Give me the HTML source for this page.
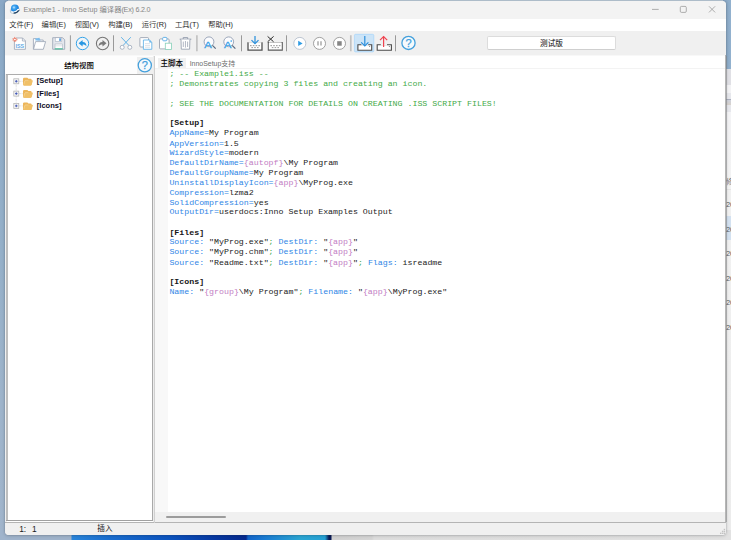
<!DOCTYPE html>
<html lang="zh-CN">
<head>
<meta charset="utf-8">
<title>Example1 - Inno Setup 编译器(Ex) 6.2.0</title>
<style>
html,body{margin:0;padding:0;}
body{width:731px;height:540px;overflow:hidden;position:relative;background:#8fadc9;
  font-family:"Liberation Sans","Noto Sans CJK SC",sans-serif;}
.abs{position:absolute;}
/* desktop / other windows behind */
#bgleft{left:0;top:0;width:8px;height:540px;background:linear-gradient(180deg,#88a7c5 0,#8dabc8 60px,#95b0c9 250px,#9eb4cb 400px,#a1b5cc 540px);}
#bgtop{left:0;top:0;width:731px;height:4px;background:#8aa8c6;}
#topline{left:8px;top:0;width:715px;height:1px;background:#adbcc9;z-index:5;}
#bgright1{left:722px;top:0;width:9px;height:69px;background:linear-gradient(90deg,#88a6c4 0,#8cabc8 5px,#93b2cf 9px);}
#bgright2{left:722px;top:69px;width:9px;height:471px;background:linear-gradient(180deg,#e0e0e5 0,#e0e0e5 15.6px,#f3f3f5 15.6px,#f3f3f5 24px,#e6e7ec 24px,#e6e7ec 30px,#8f96a8 30px,#cfd2dc 31.2px,#d9d2ca 36.4px,#e6e7ec 36.4px,#e6e7ec 43.5px,#f4f4f6 43.5px,#f4f4f6 51px,#f2f2f4 51px,#f3f3f3 120px,#e6e6e6 120.5px,#f1f1f1 121px,#f1f1f1 147px,#d3e1f0 147px,#d3e1f0 171.5px,#f1f1f1 171.5px,#eeeeee 300px,#ececec 466px,#dedede 471px);}
.bt{left:726px;width:8px;font-size:7.4px;line-height:9px;height:9px;color:#5a5a5a;white-space:nowrap;overflow:hidden;}
#bgbottom{left:0;top:530px;width:731px;height:10px;
  background:linear-gradient(90deg,#a0b4cc 0,#a0b4cc 71px,#2a86dc 72px,#1a6ed0 110px,#0c54c0 170px,#0738a2 215px,#062a8e 246px,#1266cc 248px,#1a7cd4 265px,#2aa6d4 300px,#25a2d6 325px,#0a1a55 329px,#0a1a55 331px,#d2d2d2 332px,#d6d6d6 372px,#dedede 374px,#e2e2e2 731px);}
/* main window */
#win{left:5px;top:1px;width:721px;height:534px;border-radius:4px;background:#f0f0f0;overflow:hidden;
  box-shadow:0 0 0 0.5px rgba(90,100,120,.14),0 0 2px 0.2px rgba(0,0,0,.07),0 1px 4px rgba(0,0,0,.12);}
#titlebar{left:0;top:0;width:721px;height:18px;background:#f3f3f3;}
#title{left:18.4px;top:2.1px;height:14px;line-height:14px;font-size:7.15px;color:#858585;white-space:nowrap;}
#menubar{left:0;top:18px;width:721px;height:11.7px;background:#fff;}
.mi{top:18px;height:11.7px;line-height:12.2px;font-size:7.3px;color:#1e1e1e;font-weight:350;white-space:nowrap;}
#toolbar{left:0;top:29.7px;width:721px;height:24.6px;background:#f0f0f0;}
#tbline{left:0;top:54.2px;width:721px;height:1px;background:#f8f8f8;}
#below{left:0;top:55px;width:721px;height:467px;background:#fff;}
/* left panel */
#lphead{left:0;top:55px;width:148px;height:18.5px;background:#fdfdfd;}
#lptitle{left:44px;top:58px;width:60px;text-align:center;font-size:7.4px;line-height:13px;color:#000;font-weight:500;white-space:nowrap;}
#helpbtn{left:131.5px;top:56px;width:16.5px;height:16.5px;background:#efefef;}
#tree{left:1.2px;top:73px;width:146.4px;height:446.5px;background:#bebebe;}
#treein{left:3px;top:74px;width:143.6px;height:444.5px;background:#fff;}
#treetop{left:1.2px;top:73px;width:146.4px;height:1px;background:#adadad;}
#treeright{left:146.6px;top:73px;width:1px;height:446.5px;background:#a9a9a9;}
#treebot{left:1.2px;top:518.5px;width:146.4px;height:1px;background:#a0a0a0;}
.tn{left:31.8px;height:12px;line-height:12px;font-size:7.55px;font-weight:bold;color:#0c0c24;white-space:nowrap;}
#lpgap{left:0;top:73px;width:2px;height:449px;background:#f0f0f0;}
#splitter{left:148px;top:55px;width:2.2px;height:467px;background:#ececec;}
/* right panel */
#tabactive{left:152.5px;top:56.5px;width:28.5px;height:10.6px;background:#f0f0f0;}
#tab1{left:155.5px;top:56.5px;height:10.6px;line-height:11.4px;font-size:7.5px;color:#000;font-weight:500;white-space:nowrap;}
#tab2{left:184.7px;top:56.5px;height:10.6px;line-height:12.2px;font-size:6.95px;color:#6c6c6c;white-space:nowrap;}
#editor{left:150px;top:67px;width:571px;height:454.5px;background:#fff;}
#gutter{left:150px;top:67px;width:13px;height:444px;background:#f8f8f8;}
#edleft{left:149.2px;top:55px;width:1px;height:467px;background:#d0d0d0;z-index:2;}
#edtop{left:150px;top:67px;width:570px;height:1px;background:#f3f3f3;}
#hscroll{left:150.2px;top:510.6px;width:570px;height:10.2px;background:#f0f0f0;}
#thumb{left:160.8px;top:515px;width:60px;height:1.6px;border-radius:1px;background:#9c9c9c;}
#edbottom{left:0;top:520.6px;width:721px;height:1px;background:#b4b4b4;}
#edright{left:720px;top:54px;width:1px;height:468px;background:#b6b6b6;}
#rshadow{left:726px;top:56px;width:1px;height:466px;background:rgba(150,150,150,.5);}
#statusbar{left:0;top:521.6px;width:721px;height:13px;background:#f0f0f0;}
.st{top:522px;height:12px;line-height:12.4px;font-size:7.6px;color:#1a1a1a;white-space:pre;}
pre#code{left:164.4px;top:68.25px;margin:0;font-family:"Liberation Mono",monospace;font-size:8.28px;line-height:11.673px;transform:scaleY(0.85);transform-origin:0 0;color:#1c1c1c;white-space:pre;letter-spacing:0;}
.c{color:#44aa48}.k{color:#2f86e6}.p{color:#c27ec4}.s{font-weight:bold;color:#161616}
.tbox{left:482.3px;top:35.4px;width:128.4px;height:14px;box-sizing:border-box;border:1px solid #dcdcdc;border-radius:2px;background:#fff;
 text-align:center;font-size:7.6px;line-height:14.2px;color:#000;border-bottom-color:#cfcfcf;}
svg{position:absolute;left:0;top:0;overflow:visible}
</style>
</head>
<body>
<div class="abs" id="bgleft"></div>
<div class="abs" id="bgtop"></div>
<div class="abs" id="topline"></div>
<div class="abs" id="bgright1"></div>
<div class="abs" id="bgright2"></div>
<div class="abs" id="bgbottom"></div>
<div class="abs bt" style="top:176.5px;color:#777">修</div>
<div class="abs bt" style="top:200px">20</div>
<div class="abs bt" style="top:224.5px">20</div>
<div class="abs bt" style="top:249px">20</div>
<div class="abs bt" style="top:273.5px">20</div>
<div class="abs bt" style="top:298px">20</div>
<div class="abs bt" style="top:322.5px">20</div>

<div class="abs" id="rshadow"></div>
<div class="abs" id="win">
  <div class="abs" id="titlebar"></div>
  <div class="abs" id="title"><span style="letter-spacing:.07px">Example1 - Inno Setup </span><span style="font-size:7.3px">编译器</span><span style="letter-spacing:-.22px">(Ex) 6.2.0</span></div>
  <div class="abs" id="menubar"></div>
  <div class="abs mi" style="left:4.3px">文件(F)</div>
  <div class="abs mi" style="left:36.6px">编辑(E)</div>
  <div class="abs mi" style="left:69.7px">视图(V)</div>
  <div class="abs mi" style="left:103.2px">构建(B)</div>
  <div class="abs mi" style="left:136.7px">运行(R)</div>
  <div class="abs mi" style="left:170px">工具(T)</div>
  <div class="abs mi" style="left:203.2px">帮助(H)</div>
  <div class="abs" id="toolbar"></div>
  <div class="abs" id="tbline"></div>
  <div class="abs" id="below"></div>

  <div class="abs" id="lphead"></div>
  <div class="abs" id="lptitle">结构视图</div>
  <div class="abs" id="helpbtn"></div>
  <div class="abs" id="lpgap"></div>
  <div class="abs" id="tree"></div><div class="abs" id="treein"></div><div class="abs" id="treetop"></div><div class="abs" id="treeright"></div><div class="abs" id="treebot"></div>
  <div class="abs tn" style="top:74.4px">[Setup]</div>
  <div class="abs tn" style="top:86.7px">[Files]</div>
  <div class="abs tn" style="top:99px">[Icons]</div>
  <div class="abs" id="splitter"></div>

  <div class="abs" id="editor"></div>
  <div class="abs" id="gutter"></div>
  <div class="abs" id="edleft"></div>
  <div class="abs" id="edtop"></div>
  <div class="abs" id="tabactive"></div>
  <div class="abs" id="tab1">主脚本</div>
  <div class="abs" id="tab2">InnoSetup支持</div>
  <div class="abs" id="hscroll"></div>
  <div class="abs" id="thumb"></div>
  <div class="abs" id="edright"></div>
  <div class="abs" id="edbottom"></div>
  <div class="abs" id="statusbar"></div>
  <div class="abs st" style="left:14.2px;font-size:8.4px;word-spacing:-0.4px">1:   1</div>
  <div class="abs st" style="left:92.3px">插入</div>
  <div class="abs tbox">测试版</div>

<pre class="abs" id="code"><span class="c">; -- Example1.iss --</span>
<span class="c">; Demonstrates copying 3 files and creating an icon.</span>

<span class="c">; SEE THE DOCUMENTATION FOR DETAILS ON CREATING .ISS SCRIPT FILES!</span>

<span class="s">[Setup]</span>
<span class="k">AppName=</span>My Program
<span class="k">AppVersion=</span>1.5
<span class="k">WizardStyle=</span>modern
<span class="k">DefaultDirName=</span><span class="p">{autopf}</span>\My Program
<span class="k">DefaultGroupName=</span>My Program
<span class="k">UninstallDisplayIcon=</span><span class="p">{app}</span>\MyProg.exe
<span class="k">Compression=</span>lzma2
<span class="k">SolidCompression=</span>yes
<span class="k">OutputDir=</span>userdocs:Inno Setup Examples Output

<span class="s">[Files]</span>
<span class="k">Source:</span> "MyProg.exe"<span class="c">;</span> <span class="k">DestDir:</span> "<span class="p">{app}</span>"
<span class="k">Source:</span> "MyProg.chm"<span class="c">;</span> <span class="k">DestDir:</span> "<span class="p">{app}</span>"
<span class="k">Source:</span> "Readme.txt"<span class="c">;</span> <span class="k">DestDir:</span> "<span class="p">{app}</span>"<span class="c">;</span> <span class="k">Flags:</span> isreadme

<span class="s">[Icons]</span>
<span class="k">Name:</span> "<span class="p">{group}</span>\My Program"<span class="c">;</span> <span class="k">Filename:</span> "<span class="p">{app}</span>\MyProg.exe"</pre>
</div>

<!-- icons overlay in page coordinates -->
<svg width="731" height="540" viewBox="0 0 731 540">
<!--ICONS-->
<!-- app icon -->
<g>
  <defs><radialGradient id="gsph" cx="38%" cy="38%" r="70%"><stop offset="0" stop-color="#c4e6ff"/><stop offset=".3" stop-color="#3ea4f0"/><stop offset=".75" stop-color="#1880dc"/><stop offset="1" stop-color="#0f5cae"/></radialGradient></defs>
  <path d="M10.5 9.4Q9.6 13.4 13.6 13.3Q18 13 19.7 8.7" fill="none" stroke="#bccad6" stroke-width="1.1"/>
  <circle cx="14.9" cy="8.4" r="4" fill="url(#gsph)"/>
  <path d="M11.4 11.6Q14.6 13.4 18.8 9.4" fill="none" stroke="#f4f8fb" stroke-width="1.5"/>
  <path d="M13.6 13.2Q17.4 13 19.2 9.8" fill="none" stroke="#1c3f60" stroke-width="1.2"/>
  <ellipse cx="18.3" cy="9.5" rx="1.1" ry=".8" fill="#fff"/>
</g>
<!-- window controls -->
<g fill="none" stroke="#9a9a9a" stroke-width=".8">
  <path d="M652 9.4H658.7"/>
  <rect x="680.3" y="6.4" width="6" height="6" rx="1.2"/>
  <path d="M709 6.3L715.1 12.4M715.1 6.3L709 12.4"/>
</g>
<!-- toolbar separators -->
<g fill="none" stroke-width="1">
  <path d="M70.4 35.3V51.3M113.5 35.3V51.3M241.5 35.3V51.3M286.5 35.3V51.3M395.5 35.3V51.3" stroke="#8e8e8e" stroke-width=".9"/>
  <path d="M196.9 35.3V51.3M350.8 35.3V51.3" stroke="#c2c2c2" stroke-width="1.7"/>
</g>
<!-- 1 new iss -->
<g>
  <path d="M16.3 38H22.6L25.4 40.8V49.3H14.4V41" fill="#fff" stroke="#97a1b3" stroke-width=".8"/>
  <path d="M22.4 38.2V41H25.2" fill="none" stroke="#97a1b3" stroke-width=".7"/>
  <circle cx="14.9" cy="39.5" r="2.1" fill="none" stroke="#ea6a52" stroke-width=".9" stroke-dasharray=".8 .85"/>
  <circle cx="14.9" cy="39.5" r="1.3" fill="#fff" stroke="#ea6a52" stroke-width=".9"/>
  <text x="15.5" y="47.8" font-family="Liberation Sans,sans-serif" font-size="5.4" font-weight="bold" fill="#62a8e4" textLength="8.6" lengthAdjust="spacingAndGlyphs">ISS</text>
</g>
<!-- 2 open -->
<g>
  <path d="M33.4 49.3V38.6H36.4L37.4 40H43.2V41.6" fill="#fff" stroke="#97a1b3" stroke-width=".8"/>
  <path d="M35.4 38.6L39.4 37.8L40.6 40.6H35.4Z" fill="#7dbcec"/>
  <path d="M33.5 49.3L35.6 41.6H45.6L43.3 49.3Z" fill="#fff" stroke="#97a1b3" stroke-width=".8"/>
</g>
<!-- 3 save -->
<g>
  <path d="M52.7 37.7H62.6L64.7 39.8V49.3H52.7Z" fill="#e4e7ed" stroke="#97a1b3" stroke-width=".8"/>
  <rect x="55.2" y="37.8" width="6.6" height="3.8" fill="#fff" stroke="#97a1b3" stroke-width=".5"/>
  <rect x="59.3" y="38.3" width="1.5" height="2.6" fill="#3f8fd8"/>
  <rect x="55" y="44" width="7.6" height="5" fill="#fff" stroke="#9aa3b3" stroke-width=".5"/>
  <path d="M55 45.8H62.6" stroke="#c2c8d2" stroke-width=".5"/>
  <rect x="54.8" y="48.2" width="8" height="1.3" fill="#58c0a0"/>
</g>
<!-- 4 undo -->
<g>
  <circle cx="82.5" cy="43.5" r="6.2" fill="#f1f5f8" stroke="#35a3e8" stroke-width="1"/>
  <path d="M78.6 43.2L82.6 39.9V42C85.4 42 86.6 43.8 86.4 46.6C85.6 45.2 84.6 44.6 82.6 44.6V46.6Z" fill="#2797e2"/>
</g>
<!-- 5 redo -->
<g>
  <circle cx="102.6" cy="43.5" r="6.2" fill="#f1f1f1" stroke="#767676" stroke-width="1.1"/>
  <path d="M106.5 43.2L102.5 39.9V42C99.7 42 98.5 43.8 98.7 46.6C99.5 45.2 100.5 44.6 102.5 44.6V46.6Z" fill="#7a7a7a"/>
</g>
<!-- 6 cut -->
<g fill="none">
  <path d="M121.2 37.2L129.4 46M130.8 37.2L122.6 46" stroke="#52ace4" stroke-width=".9"/>
  <circle cx="122.2" cy="47.3" r="2" fill="#fff" stroke="#9aa6b8" stroke-width=".8"/>
  <circle cx="129.8" cy="47.3" r="2" fill="#fff" stroke="#9aa6b8" stroke-width=".8"/>
</g>
<!-- 7 copy -->
<g>
  <rect x="139.9" y="37.6" width="8.6" height="9.4" rx=".8" fill="#fff" stroke="#8f99aa" stroke-width=".8"/>
  <path d="M143.4 40H149.6L151.8 42.2V49.3H143.4Z" fill="#fff" stroke="#56ace6" stroke-width=".8"/>
  <path d="M149.4 40V42.4H151.8Z" fill="#56ace6"/>
  <path d="M145 43.6H150M145 45.4H150M145 47.2H150" stroke="#c6ccd6" stroke-width=".6"/>
</g>
<!-- 8 paste -->
<g>
  <rect x="159.5" y="38.9" width="9.6" height="10" rx="1" fill="#fff" stroke="#8f99aa" stroke-width=".8"/>
  <rect x="162.7" y="37.4" width="4.2" height="3.4" rx=".9" fill="#fff" stroke="#56ace6" stroke-width=".9"/>
  <rect x="165.3" y="43.2" width="6.2" height="6.2" fill="#fff" stroke="#86d0b8" stroke-width=".8"/>
</g>
<!-- 9 trash -->
<g fill="none" stroke="#8f99aa" stroke-width=".8">
  <path d="M183.2 39V37.6H187.7V39" stroke-width=".9"/>
  <path d="M179.7 39.2H191.3" stroke-width="1"/>
  <path d="M181 39.6L181.3 49.2H189.6L189.9 39.6" fill="#fff"/>
  <path d="M183.3 41.6V47M185.45 41V47.6M187.6 41.6V47" stroke-width=".7"/>
</g>
<!-- 10 find -->
<g>
  <circle cx="209" cy="41.8" r="4.9" fill="#fcfcfe" stroke="#919db2" stroke-width=".9"/>
  <path d="M212.4 45.4L215.7 48.7" stroke="#5a6a80" stroke-width="1.2"/>
  <text x="204.3" y="47.8" font-family="Liberation Sans,sans-serif" font-size="9" fill="#35a0e8" stroke="#35a0e8" stroke-width=".3" textLength="7.4" lengthAdjust="spacingAndGlyphs">A</text>
</g>
<!-- 11 find next -->
<g>
  <circle cx="228.7" cy="41.8" r="4.9" fill="#fcfcfe" stroke="#919db2" stroke-width=".9"/>
  <path d="M232.1 45.4L235.4 48.7" stroke="#5a6a80" stroke-width="1.2"/>
  <text x="224" y="47.8" font-family="Liberation Sans,sans-serif" font-size="9" fill="#35a0e8" stroke="#35a0e8" stroke-width=".3" textLength="7.4" lengthAdjust="spacingAndGlyphs">A</text>
  <circle cx="231.2" cy="41.1" r=".8" fill="#35a0e8"/>
</g>
<!-- 12 compile -->
<g>
  <path d="M247.6 42.4H262.4V50.4H247.6Z" fill="#fff"/>
  <path d="M248 42.3V50.1H262V42.3" fill="none" stroke="#505050" stroke-width="1.3"/>
  <path d="M248.6 42.6H261.4" stroke="#b8b8b8" stroke-width=".4"/>
  <path d="M250 45.7H260" stroke="#707070" stroke-width=".8" stroke-dasharray="1.6 1.2"/>
  <path d="M251.4 47.6H259" stroke="#808080" stroke-width=".8" stroke-dasharray="1.6 1.2"/>
  <path d="M255 36V43.2" stroke="#2b90dc" stroke-width="1.25"/>
  <path d="M251.5 40.1L255 43.7L258.5 40.1" fill="none" stroke="#2b90dc" stroke-width="1.25"/>
</g>
<!-- 13 stop compile -->
<g>
  <path d="M268.3 42.5H282.3V50.1H268.3Z" fill="#fff" stroke="#5a5a5a" stroke-width="1.05"/>
  <path d="M269 42.5H281.6" stroke="#f4f4f4" stroke-width=".7"/>
  <path d="M270.4 45.7H280.4" stroke="#707070" stroke-width=".8" stroke-dasharray="1.6 1.2"/>
  <path d="M271.8 47.6H279.4" stroke="#808080" stroke-width=".8" stroke-dasharray="1.6 1.2"/>
  <path d="M267.6 36.4L273.6 41.8M273.6 36.4L267.6 41.8" stroke="#2a2a2a" stroke-width="1"/>
</g>
<!-- 14 run -->
<g>
  <circle cx="299.8" cy="43.4" r="6" fill="#fff" stroke="#a3b0c2" stroke-width=".7"/>
  <path d="M298.2 40.7L302.6 43.4L298.2 46.1Z" fill="#2f9ce4"/>
</g>
<!-- 15 pause -->
<g>
  <circle cx="319.5" cy="43.4" r="6" fill="#fff" stroke="#8a8a8a" stroke-width=".8"/>
  <path d="M318 41.2V45.6M321 41.2V45.6" stroke="#8a8a8a" stroke-width="1.1"/>
</g>
<!-- 16 stop -->
<g>
  <circle cx="339.5" cy="43.4" r="6" fill="#fff" stroke="#8a8a8a" stroke-width=".8"/>
  <rect x="337.2" y="41.2" width="4.5" height="4.5" fill="#858585"/>
</g>
<!-- 17 selected import -->
<g>
  <rect x="354.4" y="34.3" width="19.4" height="17.6" rx="1.2" fill="#cce4f7" stroke="#9ad0fb" stroke-width=".6"/>
  <path d="M357.9 44.8H371.7V50.2H357.9Z" fill="#fff" stroke="#4a4a4a" stroke-width="1.1"/>
  <path d="M361.4 44H368.2V45.7H361.4Z" fill="#eaf3fb"/>
  <circle cx="369.7" cy="46.4" r=".5" fill="#666"/>
  <path d="M364.8 36V45.8" stroke="#2b8edb" stroke-width="1.2"/>
  <path d="M361.2 42.4L364.8 46L368.4 42.4" fill="none" stroke="#2b8edb" stroke-width="1.2"/>
</g>
<!-- 18 export -->
<g>
  <path d="M377.2 44.8H391.4V50.2H377.2Z" fill="#fff" stroke="#4a4a4a" stroke-width="1.1"/>
  <path d="M380.8 44H387V45.7H380.8Z" fill="#f4f4f4"/>
  <circle cx="389.3" cy="46.4" r=".5" fill="#666"/>
  <path d="M383.6 36.8V47" stroke="#f0434f" stroke-width="1.2"/>
  <path d="M380 40.2L383.6 36.6L387.2 40.2" fill="none" stroke="#f0434f" stroke-width="1.2"/>
</g>
<!-- 19 help -->
<g>
  <circle cx="408.5" cy="42.9" r="6.6" fill="#f6fafd" stroke="#44a0dc" stroke-width="1.3"/>
  <text x="408.5" y="46.9" text-anchor="middle" font-family="Liberation Sans,sans-serif" font-size="11" fill="#44a0dc" stroke="#44a0dc" stroke-width=".25">?</text>
</g>
<!-- left panel help -->
<g>
  <circle cx="144.8" cy="65.3" r="6.6" fill="#f6fafd" stroke="#44a0dc" stroke-width="1.3"/>
  <text x="144.8" y="69.3" text-anchor="middle" font-family="Liberation Sans,sans-serif" font-size="11" fill="#44a0dc" stroke="#44a0dc" stroke-width=".25">?</text>
</g>
<!-- tree -->
<g>
  <path d="M16.2 83.6V103.2M19 81.3H23M19 93.6H23M19 105.9H23" stroke="#c4c4c4" stroke-width=".7" stroke-dasharray=".7 .7"/>
  <g>
    <rect x="13.8" y="78.8" width="5" height="5" fill="#f4f4f4" stroke="#b0b0b0" stroke-width=".7"/>
    <path d="M15 81.3H17.6M16.3 80V82.6" stroke="#3048b0" stroke-width=".8"/>
    <path d="M23 79Q23 77.8 24.2 77.8H27.4L28.4 78.8H30.6Q31.6 78.8 31.6 79.8V84.3Q31.6 85.5 30.4 85.5H24.2Q23 85.5 23 84.3Z" fill="#ecb55a"/>
    <path d="M25.4 80.2H32.2Q33.1 80.2 32.8 81.1L31.6 84.7Q31.3 85.5 30.4 85.5H24Q23.3 85.5 23.6 84.6L24.6 81Q24.8 80.2 25.4 80.2Z" fill="#f0c068"/>
    <path d="M23.8 84.4L24.8 80.9Q25 80.3 25.7 80.3H28.4" fill="none" stroke="#f8e2b8" stroke-width=".45"/>
  </g>
  <g transform="translate(0 12.3)">
    <rect x="13.8" y="78.8" width="5" height="5" fill="#f4f4f4" stroke="#b0b0b0" stroke-width=".7"/>
    <path d="M15 81.3H17.6M16.3 80V82.6" stroke="#3048b0" stroke-width=".8"/>
    <path d="M23 79Q23 77.8 24.2 77.8H27.4L28.4 78.8H30.6Q31.6 78.8 31.6 79.8V84.3Q31.6 85.5 30.4 85.5H24.2Q23 85.5 23 84.3Z" fill="#ecb55a"/>
    <path d="M25.4 80.2H32.2Q33.1 80.2 32.8 81.1L31.6 84.7Q31.3 85.5 30.4 85.5H24Q23.3 85.5 23.6 84.6L24.6 81Q24.8 80.2 25.4 80.2Z" fill="#f0c068"/>
    <path d="M23.8 84.4L24.8 80.9Q25 80.3 25.7 80.3H28.4" fill="none" stroke="#f8e2b8" stroke-width=".45"/>
  </g>
  <g transform="translate(0 24.6)">
    <rect x="13.8" y="78.8" width="5" height="5" fill="#f4f4f4" stroke="#b0b0b0" stroke-width=".7"/>
    <path d="M15 81.3H17.6M16.3 80V82.6" stroke="#3048b0" stroke-width=".8"/>
    <path d="M23 79Q23 77.8 24.2 77.8H27.4L28.4 78.8H30.6Q31.6 78.8 31.6 79.8V84.3Q31.6 85.5 30.4 85.5H24.2Q23 85.5 23 84.3Z" fill="#ecb55a"/>
    <path d="M25.4 80.2H32.2Q33.1 80.2 32.8 81.1L31.6 84.7Q31.3 85.5 30.4 85.5H24Q23.3 85.5 23.6 84.6L24.6 81Q24.8 80.2 25.4 80.2Z" fill="#f0c068"/>
    <path d="M23.8 84.4L24.8 80.9Q25 80.3 25.7 80.3H28.4" fill="none" stroke="#f8e2b8" stroke-width=".45"/>
  </g>
</g>
<!-- size grip -->
<g fill="#c2c2c2">
  <rect x="723.7" y="528.8" width="1.4" height="1.4"/>
  <rect x="721.9" y="530.7" width="1.4" height="1.4"/><rect x="723.7" y="530.7" width="1.4" height="1.4"/>
  <rect x="720" y="532.6" width="1.4" height="1.4"/><rect x="721.9" y="532.6" width="1.4" height="1.4"/><rect x="723.7" y="532.6" width="1.4" height="1.4"/>
</g>
</svg>
</body>
</html>
